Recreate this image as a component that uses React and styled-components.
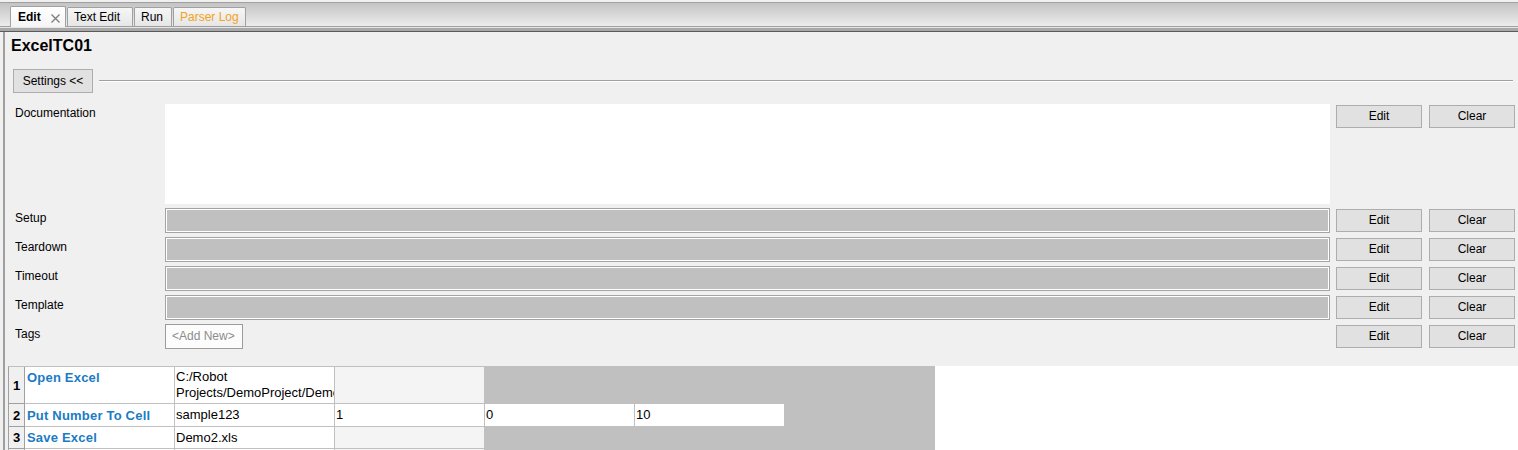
import React from 'react'
import styled, {createGlobalStyle} from 'styled-components'

const GlobalStyle = createGlobalStyle`
    body {
        margin: 0;
        background: #f0f0f0;
        font-family: "Liberation Sans", Arial, sans-serif;
        font-size: 12px;
        color: #000;
    }
`

const FIELDS = ['Setup', 'Teardown', 'Timeout', 'Template']

const ROWS = [
    {n: 1, height: 37, keyword: 'Open Excel', cells: [['C:/Robot', 'Projects/DemoProject/Demo2.xls'], 'blank', 'empty', 'empty', 'empty']},
    {n: 2, height: 23, keyword: 'Put Number To Cell', cells: ['sample123', '1', '0', '10', 'empty']},
    {n: 3, height: 22, keyword: 'Save Excel', cells: ['Demo2.xls', 'blank', 'empty', 'empty', 'empty']},
    {n: 4, height: 22, keyword: '', cells: ['', 'blank', 'empty', 'empty', 'empty']},
]

function CloseIcon() {
    return (
        <svg width="9" height="9" viewBox="0 0 9 9">
            <path d="M0.5 0.5 L8.5 8.5 M8.5 0.5 L0.5 8.5" stroke="#7a7a7a" strokeWidth="1.2" fill="none" />
        </svg>
    )
}

export default function App() {
    return (
        <>
            <GlobalStyle />
            <TabStrip>
                <Tab active w={56}>
                    <b>Edit</b>
                    <CloseBox><CloseIcon /></CloseBox>
                </Tab>
                <Tab w={66}>Text Edit</Tab>
                <Tab w={38}>Run</Tab>
                <Tab w={73} warn>Parser Log</Tab>
            </TabStrip>
            <TabRule />

            <Page>
                <Editor>
                    <Title>ExcelTC01</Title>

                    <SettingsRow>
                        <SettingsButton>Settings &lt;&lt;</SettingsButton>
                        <Rule />
                    </SettingsRow>

                    <Form>
                        <FieldRow>
                            <Label first>Documentation</Label>
                            <DocBox />
                            <SmallButton>Edit</SmallButton>
                            <SmallButton>Clear</SmallButton>
                        </FieldRow>

                        {FIELDS.map(name => (
                            <FieldRow key={name}>
                                <Label>{name}</Label>
                                <GreyField />
                                <SmallButton>Edit</SmallButton>
                                <SmallButton>Clear</SmallButton>
                            </FieldRow>
                        ))}

                        <FieldRow>
                            <Label>Tags</Label>
                            <AddNew>&lt;Add New&gt;</AddNew>
                            <SmallButton>Edit</SmallButton>
                            <SmallButton>Clear</SmallButton>
                        </FieldRow>
                    </Form>
                </Editor>

                <GridArea>
                    <Gutter />
                    <Table>
                        {ROWS.map(row => (
                            <React.Fragment key={row.n}>
                                <RowHead h={row.height}>{row.n}</RowHead>
                                <Keyword h={row.height} top={row.height > 30}>{row.keyword}</Keyword>
                                {row.cells.map((c, i) => {
                                    if (c === 'empty') return <Cell key={i} h={row.height} kind="empty" />
                                    if (c === 'blank') return <Cell key={i} h={row.height} kind="blank" />
                                    if (Array.isArray(c)) return (
                                        <Cell key={i} h={row.height} top>
                                            {c[0]}<br />{c[1]}
                                        </Cell>
                                    )
                                    return <Cell key={i} h={row.height}>{c}</Cell>
                                })}
                            </React.Fragment>
                        ))}
                    </Table>
                    <Rest />
                </GridArea>
            </Page>
        </>
    )
}

const TabStrip = styled.div`
    display: flex;
    align-items: flex-end;
    height: 23px;
    margin-top: 2px;
    padding-left: 10px;
    border-top: 1px solid #a0a0a0;
    border-bottom: 1px solid #a0a0a0;
    background: linear-gradient(#c4c4c4, #ececec);
`
const Tab = styled.div`
    display: flex;
    align-items: center;
    justify-content: space-between;
    box-sizing: border-box;
    width: ${props => props.w}px;
    height: ${props => props.active ? '21px' : '19px'};
    margin-bottom: ${props => props.active ? '-1px' : '0'};
    margin-right: 1px;
    padding: ${props => props.active ? '0 5px 0 7px' : '0 0 0 6px'};
    border: 1px solid #a0a0a0;
    border-bottom: none;
    border-radius: 2px 2px 0 0;
    background: ${props => props.active
        ? 'linear-gradient(#ffffff, #f4f4f4)'
        : 'linear-gradient(#f6f6f6, #e6e6e6)'};
    color: ${props => props.warn ? '#f2a31b' : '#000'};
    font-size: 12px;
    white-space: nowrap;
`
const CloseBox = styled.span`
    display: flex;
    padding-top: 2px;
`
const TabRule = styled.div`
    height: 3px;
    border-top: 1px solid #e6e6e6;
    border-bottom: 1px solid #5a5a5a;
    background: #a8a8a8;
`
const Page = styled.div`
    margin-left: 3px;
    border-left: 2px solid #a0a0a0;
`
const Editor = styled.div`
    padding: 5px 3px 17px 6px;
    background: #f0f0f0;
`
const Title = styled.div`
    font-size: 16px;
    font-weight: bold;
    line-height: 18px;
`
const SettingsRow = styled.div`
    display: flex;
    align-items: center;
    gap: 6px;
    margin-top: 14px;
    padding-left: 2px;
`
const SettingsButton = styled.div`
    box-sizing: border-box;
    width: 80px;
    height: 24px;
    line-height: 22px;
    text-align: center;
    background: #e1e1e1;
    border: 1px solid #adadad;
    cursor: pointer;
`
const Rule = styled.div`
    flex: 1;
    margin-right: 2px;
    border-top: 1px solid #a0a0a0;
    border-bottom: 1px solid #ffffff;
`
const Form = styled.div`
    display: flex;
    flex-direction: column;
    gap: 4px;
    margin-top: 11px;
    padding-left: 4px;
`
const FieldRow = styled.div`
    display: grid;
    grid-template-columns: 150px 1fr 92px 93px;
    align-items: start;
`
const Label = styled.div`
    padding-top: ${props => props.first ? '2px' : '3px'};
    line-height: 14px;
`
const DocBox = styled.div`
    height: 100px;
    background: #fff;
`
const GreyField = styled.div`
    box-sizing: border-box;
    height: 25px;
    background: #c0c0c0;
    border: 1px solid #a4a4a4;
    box-shadow: inset 0 0 0 1px #fff;
`
const AddNew = styled.div`
    box-sizing: border-box;
    width: 78px;
    height: 25px;
    line-height: 23px;
    padding-left: 6px;
    background: #fcfcfc;
    border: 1px solid #9c9c9c;
    color: #8c8c8c;
`
const SmallButton = styled.div`
    justify-self: end;
    box-sizing: border-box;
    width: 86px;
    height: 23px;
    margin-top: 1px;
    line-height: 21px;
    text-align: center;
    background: #e1e1e1;
    border: 1px solid #adadad;
    cursor: pointer;
`
const GridArea = styled.div`
    display: flex;
    align-items: flex-start;
    background: #fff;
`
const Gutter = styled.div`
    align-self: stretch;
    width: 3px;
    background: #f0f0f0;
`
const Table = styled.div`
    display: grid;
    grid-template-columns: 16px 150px 160px 150px 150px 150px 150px;
    border-top: 1px solid #c0c0c0;
    border-left: 1px solid #a0a0a0;
    font-size: 13px;
`
const RowHead = styled.div`
    box-sizing: border-box;
    height: ${props => props.h}px;
    display: flex;
    align-items: center;
    justify-content: center;
    background: #f0f0f0;
    border-right: 1px solid #a0a0a0;
    border-bottom: 1px solid #a0a0a0;
    font-weight: bold;
`
const Keyword = styled.div`
    box-sizing: border-box;
    height: ${props => props.h}px;
    display: flex;
    align-items: ${props => props.top ? 'flex-start' : 'center'};
    padding: ${props => props.top ? '3px 2px 0' : '0 2px'};
    background: #fff;
    border-right: 1px solid #c0c0c0;
    border-bottom: 1px solid #c0c0c0;
    color: #1b7bc3;
    font-weight: bold;
    font-size: 13px;
    letter-spacing: 0.2px;
    white-space: nowrap;
    overflow: hidden;
`
const Cell = styled.div`
    box-sizing: border-box;
    height: ${props => props.h}px;
    display: ${props => props.top ? 'block' : 'flex'};
    align-items: center;
    padding: ${props => props.top ? '2px 1px 0' : '0 1px'};
    line-height: 16px;
    background: ${props => props.kind === 'empty' ? '#c0c0c0' : props.kind === 'blank' ? '#f4f4f4' : '#fff'};
    border-right: 1px solid #c0c0c0;
    border-bottom: 1px solid #c0c0c0;
    white-space: nowrap;
    overflow: hidden;
`
const Rest = styled.div`
    flex: 1;
`
